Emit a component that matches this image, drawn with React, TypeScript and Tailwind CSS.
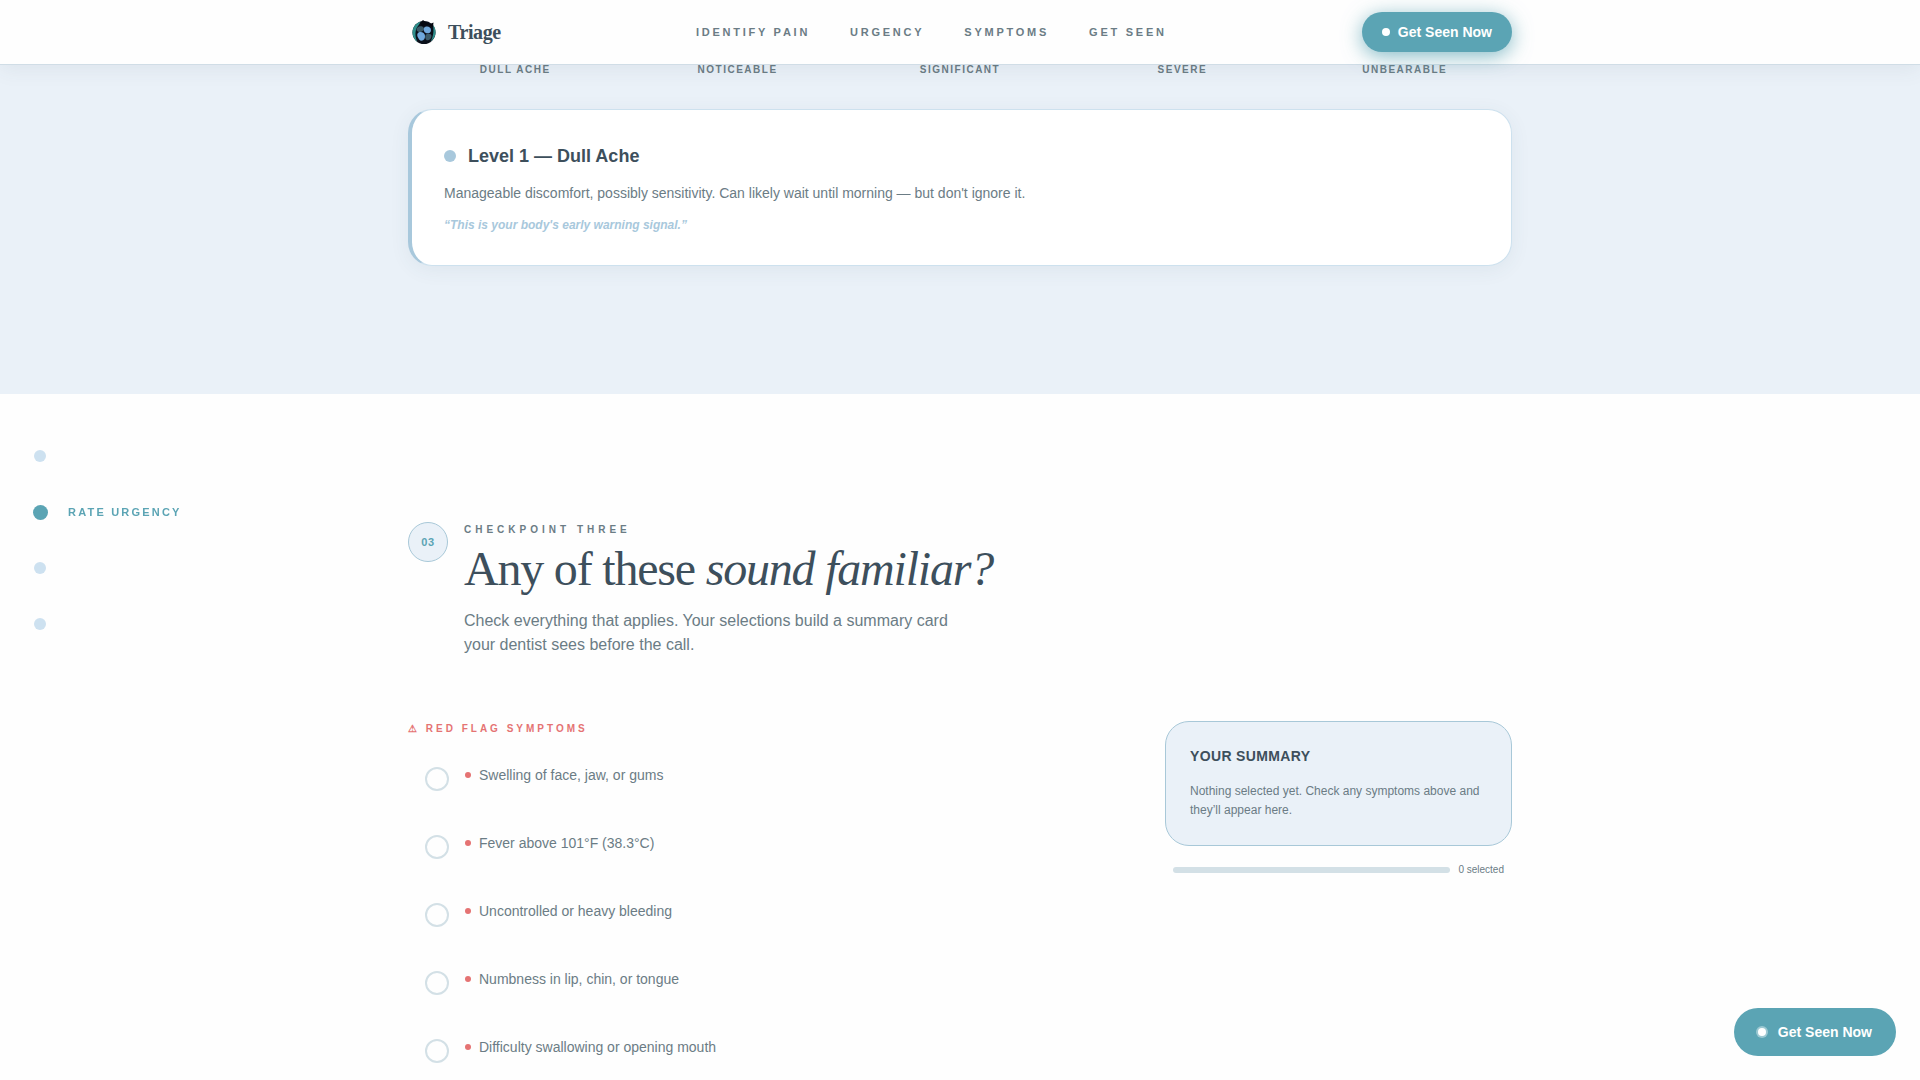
import React, { useState } from 'react';

const NAV_LINKS = [
  { label: 'Identify Pain', href: '#pain' },
  { label: 'Urgency', href: '#urgency' },
  { label: 'Symptoms', href: '#symptoms' },
  { label: 'Get Seen', href: '#seen' },
];

const LEVELS = ['Dull Ache', 'Noticeable', 'Significant', 'Severe', 'Unbearable'];

const STEPS = [
  { label: 'Identify Pain', href: '#pain' },
  { label: 'Rate Urgency', href: '#urgency' },
  { label: 'Symptoms', href: '#symptoms' },
  { label: 'Get Seen', href: '#seen' },
];

const RED_FLAGS = [
  'Swelling of face, jaw, or gums',
  'Fever above 101°F (38.3°C)',
  'Uncontrolled or heavy bleeding',
  'Numbness in lip, chin, or tongue',
  'Difficulty swallowing or opening mouth',
];

const Logo: React.FC = () => (
  <svg viewBox="0 0 24 24" className="h-6 w-6" aria-hidden="true">
    <circle cx="12" cy="12.5" r="11.5" fill="#0a0f1a" />
    <path d="M9 1.5C4 3 .5 7 .5 12.5c0 4 2 7.500 5 9.500C2.500 17 3 9 6 6z" fill="#2f8f8c" />
    <path d="M21 5c2 2 2.800 5 2.500 8.500-.4 3.500-2.500 6.500-5 8C21.500 17 22 10 21 5z" fill="#2f8f8c" />
    <path d="M8 3l3-3 3 2.500 4 1.500 3.500-1.500L21 7l-5-2-6 1z" fill="#050810" />
    <path d="M5 8c1.500-2 5-2.500 6.500-.5 1.200 2-.8 4.500-3.500 4.500S3.800 10 5 8z" fill="#3c5b68" />
    <path d="M13 7c2.500-1.200 6 0 6 3.200 0 2.300-2 3.500-4.500 3-3-.6-3.800-5-1.500-6.200z" fill="#6fa8dc" />
    <path d="M6.500 12.500c3-1.200 6.300.5 6.500 3.200.2 2.800-1 5-3.500 5-2 0-2.500-1.700-3.500-3.200-1-1.600-1.200-4 .5-5z" fill="#6fa8dc" />
    <path d="M14.500 14.200c2.300-1 5-.4 5 1.800s-1.800 4.300-4 4.300-3.300-5-1-6.100z" fill="#3c5b68" />
  </svg>
);

const Header: React.FC = () => (
  <header className="sticky top-0 z-20 border-b border-[#d0dde6] bg-[#fefefe] shadow-[0_4px_20px_rgba(61,79,95,0.08)]">
    <div className="mx-auto flex h-16 max-w-[1104px] items-center justify-between">
      <a href="#top" className="flex items-center gap-3 pl-1">
        <Logo />
        <span className="font-['Liberation_Serif',serif] text-xl font-bold tracking-[-0.02em] text-[#3d4f5c]">Triage</span>
      </a>
      <nav className="flex gap-10" aria-label="Main">
        {NAV_LINKS.map((link) => (
          <a key={link.href} href={link.href} className="text-[11px] font-bold uppercase tracking-[0.25em] text-[#6b7c85]">
            {link.label}
          </a>
        ))}
      </nav>
      <button
        type="button"
        className="flex h-10 items-center gap-2 rounded-full bg-[#5ba4b4] px-5 text-sm font-bold text-white shadow-[0_4px_20px_rgba(91,164,180,0.75)]"
      >
        <span className="h-2 w-2 rounded-full bg-white" />
        Get Seen Now
      </button>
    </div>
  </header>
);

const StepRail: React.FC<{ active: number }> = ({ active }) => (
  <nav className="fixed left-8 top-[448px] z-10 flex flex-col gap-10" aria-label="Progress">
    {STEPS.map((step, i) => (
      <a key={step.label} href={step.href} aria-label={step.label} className="flex h-4 items-center gap-5">
        <span className="flex w-4 justify-center">
          <span className={i === active ? 'h-[15px] w-[15px] rounded-full bg-[#5ba4b4]' : 'h-3 w-3 rounded-full bg-[#cde1f0]'} />
        </span>
        {i === active && (
          <span className="text-[11px] font-bold uppercase tracking-[0.2em] text-[#5ba4b4]">{step.label}</span>
        )}
      </a>
    ))}
  </nav>
);

const UrgencySection: React.FC = () => (
  <section id="urgency" className="bg-[#eaf1f8] pb-32">
    <div className="mx-auto max-w-[1104px]">
      <div className="-mx-1 grid grid-cols-5 text-center text-[10px] font-bold uppercase leading-[10px] tracking-[0.15em] text-[#6b7c85]">
        {LEVELS.map((level) => (
          <span key={level}>{level}</span>
        ))}
      </div>
      <div className="mt-[34px] rounded-3xl border border-l-4 border-[#cde1ee] border-l-[#a8c8dc] bg-white px-8 pb-[31px] pt-8 shadow-[0_4px_20px_rgba(61,79,95,0.07)]">
        <div className="flex items-center gap-3">
          <span className="h-3 w-3 rounded-full bg-[#a8c8dc]" />
          <h3 className="text-lg font-bold leading-7 text-[#3d4f5c]">Level 1 — Dull Ache</h3>
        </div>
        <p className="mt-3 text-sm leading-[22px] text-[#6b7c85]">
          Manageable discomfort, possibly sensitivity. Can likely wait until morning — but don't ignore it.
        </p>
        <p className="mt-3 text-xs font-bold italic leading-[18px] text-[#a8c8dc]">“This is your body's early warning signal.”</p>
      </div>
    </div>
  </section>
);

interface SymptomRowProps {
  label: string;
  checked: boolean;
  onToggle: () => void;
}

const SymptomRow: React.FC<SymptomRowProps> = ({ label, checked, onToggle }) => (
  <label className="flex cursor-pointer items-start px-[17px] py-3">
    <input
      type="checkbox"
      checked={checked}
      onChange={onToggle}
      className="mt-0.5 h-6 w-6 shrink-0 appearance-none rounded-full border-2 border-[#d3e0e6] bg-transparent checked:border-[#e57373] checked:bg-[#e57373]"
    />
    <span className="ml-4 flex items-center gap-2 text-sm text-[#6b7c85]">
      <span className="h-1.5 w-1.5 rounded-full bg-[#e57373]" />
      {label}
    </span>
  </label>
);

const SymptomsSection: React.FC = () => {
  const [selected, setSelected] = useState<string[]>([]);

  const toggle = (item: string) =>
    setSelected((prev) => (prev.includes(item) ? prev.filter((s) => s !== item) : [...prev, item]));

  return (
    <section id="symptoms" className="pt-32">
      <div className="mx-auto max-w-[1104px]">
        <div className="flex items-start gap-4">
          <span className="flex h-10 w-10 shrink-0 items-center justify-center rounded-full border border-[#a8c8d8] bg-[#eaf1f8] text-[11px] font-bold leading-4 tracking-wider text-[#5ba4b4]">
            03
          </span>
          <div>
            <p className="text-[10px] font-bold uppercase leading-[15px] tracking-[0.4em] text-[#6b7c85]">Checkpoint Three</p>
            <h2 className="mt-2 font-['Liberation_Serif',serif] text-5xl tracking-tight text-[#3d4f5c]">
              Any of these <em>sound familiar?</em>
            </h2>
            <p className="mt-4 max-w-[512px] text-base text-[#6b7c85]">
              Check everything that applies. Your selections build a summary card your dentist sees before the call.
            </p>
          </div>
        </div>

        <div className="mt-16 flex items-start justify-between gap-12">
          <div className="flex-1">
            <h3 className="text-[10px] font-bold uppercase leading-4 tracking-[0.3em] text-[#e57373]">⚠ Red Flag Symptoms</h3>
            <div className="mt-4 flex flex-col gap-[18px]">
              {RED_FLAGS.map((item) => (
                <SymptomRow key={item} label={item} checked={selected.includes(item)} onToggle={() => toggle(item)} />
              ))}
            </div>
          </div>

          <aside className="w-[347px]">
            <div className="rounded-3xl border border-[#a8c8d8] bg-[#eaf1f8] px-6 pb-[25px] pt-6">
              <h4 className="text-sm font-bold uppercase tracking-[0.025em] text-[#3d4f5c]">Your Summary</h4>
              {selected.length === 0 ? (
                <p className="mt-4 text-xs leading-[19px] text-[#6b7c85]">
                  Nothing selected yet. Check any symptoms above and they’ll appear here.
                </p>
              ) : (
                <ul className="mt-4 text-xs leading-[19px] text-[#6b7c85]">
                  {selected.map((item) => (
                    <li key={item}>{item}</li>
                  ))}
                </ul>
              )}
            </div>
            <div className="mt-4 flex items-center gap-2 px-2">
              <div className="h-1.5 flex-1 overflow-hidden rounded-full bg-[#d3e0e6]">
                <div className="h-full bg-[#5ba4b4]" style={{ width: `${(selected.length / RED_FLAGS.length) * 100}%` }} />
              </div>
              <span className="text-[10px] leading-4 text-[#6b7c85]">{selected.length} selected</span>
            </div>
          </aside>
        </div>
      </div>
    </section>
  );
};

export default function App() {
  return (
    <div id="top" className="min-h-screen bg-[#fefefe] font-['Liberation_Sans',Arial,sans-serif]">
      <Header />
      <StepRail active={1} />
      <main>
        <UrgencySection />
        <SymptomsSection />
      </main>
      <button
        type="button"
        className="fixed bottom-6 right-6 z-10 flex h-12 items-center gap-3 rounded-full bg-[#5ba4b4] px-6 text-sm font-bold text-white"
      >
        <span className="h-2 w-2 rounded-full bg-white ring-2 ring-white/40" />
        Get Seen Now
      </button>
    </div>
  );
}
